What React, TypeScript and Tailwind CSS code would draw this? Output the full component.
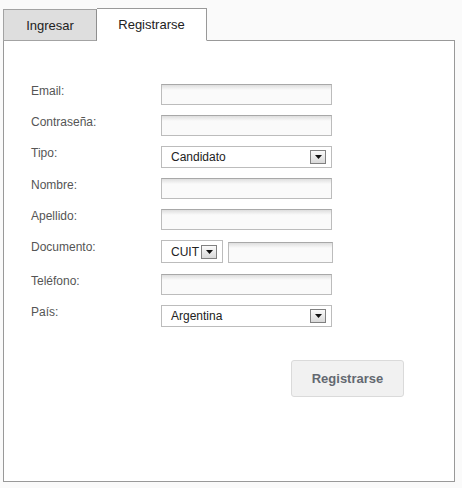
import React from 'react';

function Arrow() {
  return (
    <span className="flex h-[14px] w-[16px] items-center justify-center border border-[#808080] bg-[linear-gradient(#fafafa,#d9d9d9)]">
      <svg width="7" height="4" viewBox="0 0 7 4">
        <path d="M0 0h7L3.5 4z" fill="#111" />
      </svg>
    </span>
  );
}

function TextInput({ className = 'w-[171px]' }: { className?: string }) {
  return (
    <div
      className={`h-[21px] border border-[#bcbcbc] border-t-[#a8a8a8] bg-[linear-gradient(#dedede,#fafafa_5px)] ${className}`}
    />
  );
}

function Select({ value, className }: { value: string; className: string }) {
  return (
    <div
      className={`flex items-center justify-between border border-[#bcbcbc] bg-white pl-[9px] pr-[5px] text-[12px] text-[#222] ${className}`}
    >
      <span>{value}</span>
      <Arrow />
    </div>
  );
}

export default function App() {
  const rows: { label: string; field: React.ReactNode }[] = [
    { label: 'Email:', field: <TextInput /> },
    { label: 'Contraseña:', field: <TextInput /> },
    { label: 'Tipo:', field: <Select value="Candidato" className="h-[22px] w-[171px]" /> },
    { label: 'Nombre:', field: <TextInput /> },
    { label: 'Apellido:', field: <TextInput /> },
    {
      label: 'Documento:',
      field: (
        <div className="flex h-[24px] items-start gap-[5px]">
          <Select value="CUIT" className="h-[23px] w-[62px]" />
          <TextInput className="mt-[2px] w-[105px]" />
        </div>
      ),
    },
    { label: 'Teléfono:', field: <TextInput /> },
    { label: 'País:', field: <Select value="Argentina" className="h-[22px] w-[171px]" /> },
  ];

  return (
    <div className="h-[488px] w-[462px] bg-[#fafafa] pl-[3px] pt-[8px] font-['Liberation_Sans',Arial,sans-serif]">
      <div className="relative z-10 -mb-px flex items-end text-[13px] text-[#222]">
        <div className="flex h-[32px] w-[94px] items-center justify-center border border-[#a3a3a3] border-r-[#8f8f8f] bg-[#dedede] pt-[1px]">
          Ingresar
        </div>
        <div className="flex h-[33px] w-[110px] items-center justify-center border-t border-r border-b border-[#999] border-b-white bg-white pt-[1px]">
          Registrarse
        </div>
      </div>

      <div className="h-[442px] w-[452px] border border-[#999] bg-white pl-[27px] pt-[43px]">
        <div className="flex flex-col gap-[10px]">
          {rows.map((row) => (
            <div key={row.label} className="flex items-start">
              <div className="w-[130px] text-[12px] leading-[14px] text-[#555]">{row.label}</div>
              {row.field}
            </div>
          ))}
        </div>

        <button className="ml-[260px] mt-[33px] h-[37px] w-[113px] rounded-[3px] border border-[#dadada] bg-[#f1f1f1] text-[13px] font-bold text-[#636870]">
          Registrarse
        </button>
      </div>
    </div>
  );
}
